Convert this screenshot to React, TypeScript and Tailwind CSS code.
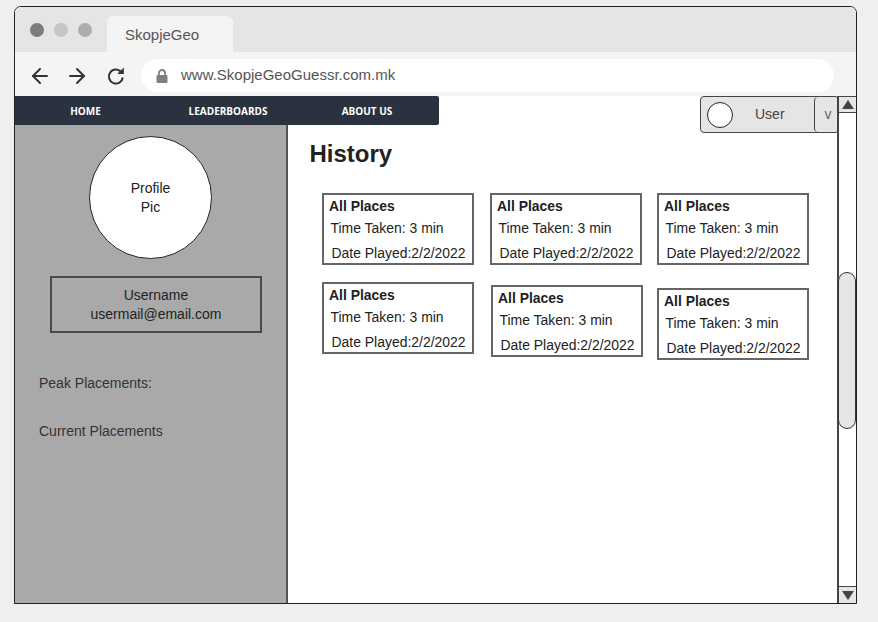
import { ArrowLeft, ArrowRight } from "lucide-react";

const sans = "font-['Liberation_Sans',Arial,sans-serif]";

function HistoryCard({ className = "" }: { className?: string }) {
  return (
    <div className={`w-[152px] h-[72px] shrink-0 border-2 border-[#666] bg-white text-[13.95px] leading-[16px] text-[#222] ${className}`}>
      <div className="pl-[5px] pt-[3px] font-bold">All Places</div>
      <div className="pl-[6.5px] pt-[6px]">Time Taken: 3 min</div>
      <div className="pl-[7.5px] pt-[9px] whitespace-nowrap">Date Played:2/2/2022</div>
    </div>
  );
}

export default function App() {
  return (
    <div className={`${sans} w-[878px] h-[622px] bg-[#efefef] pt-[6px] pl-[14px] overflow-hidden`}>
      <div className="relative w-[843px] h-[598px] flex flex-col border border-[#222] rounded-t-[7px] overflow-hidden bg-white">
        {/* ── Browser chrome ───────────────────────────────────────── */}
        <div className="h-[45px] shrink-0 bg-[#e5e5e5] flex items-end">
          <div className="flex items-center gap-[10px] pl-[15px] pb-[15px] w-[92px]">
            <span className="size-[14px] rounded-full bg-[#7c7c7c]" />
            <span className="size-[14px] rounded-full bg-[#c6c6c6]" />
            <span className="size-[14px] rounded-full bg-[#adadad]" />
          </div>
          <div className="w-[126px] h-[36px] bg-[#f4f4f4] rounded-t-[6px] flex items-center pl-[18px] pt-[2px] text-[15px] text-[#555]">
            SkopjeGeo
          </div>
        </div>
        <div className="h-[44px] shrink-0 bg-[#f4f4f4] flex items-center pl-[13px] pt-[3px]">
          <ArrowLeft size={24} strokeWidth={2} className="text-[#333]" />
          <ArrowRight size={24} strokeWidth={2} className="text-[#333] ml-[13px]" />
          <svg width="20" height="20" viewBox="0 0 20 20" className="ml-[17px] text-[#333]">
            <path d="M15 5.8A7 7 0 1 0 16.8 11.5" fill="none" stroke="currentColor" strokeWidth="2" />
            <path d="M11.2 8H17.8V1.6z" fill="currentColor" />
          </svg>
          <div className="ml-[15px] w-[693px] h-[33px] bg-white rounded-full flex items-center pl-[15px] text-[15px] text-[#555]">
            <svg width="12" height="14" viewBox="0 0 12 14" className="mr-[13px]">
              <path d="M3 6V4a3 3 0 0 1 6 0v2" fill="none" stroke="#808080" strokeWidth="1.8" />
              <rect x="0.5" y="6" width="11" height="8" rx="1" fill="#808080" />
            </svg>
            www.SkopjeGeoGuessr.com.mk
          </div>
        </div>

        {/* ── Nav ──────────────────────────────────────────────────── */}
        <nav className="h-[29px] w-[424px] shrink-0 bg-[#29323e] rounded-r-[2px] flex items-center pt-[1px] font-['Open_Sans',sans-serif] text-[10px] font-bold text-white uppercase">
          <span className="w-[141px] text-center">Home</span>
          <span className="w-[144px] text-center">Leaderboards</span>
          <span className="w-[134px] text-center">About Us</span>
        </nav>

        {/* ── Page ─────────────────────────────────────────────────── */}
        <div className="flex flex-1 min-h-0">
          <aside className="w-[273px] shrink-0 bg-[#a9a9a9] border-r-2 border-[#555] text-[14px] leading-[19px] text-[#222] flex flex-col">
            <div className="mt-[11px] ml-[74px] size-[123px] rounded-full bg-white border border-[#222] flex items-center justify-center text-center pt-[1px]">
              Profile<br />Pic
            </div>
            <div className="mt-[17px] ml-[35px] w-[212px] h-[57px] border-2 border-[#4a4a4a] text-center pt-[8px]">
              Username<br />usermail@email.com
            </div>
            <div className="mt-[41px] ml-[24px] text-[#333]">Peak Placements:</div>
            <div className="mt-[29px] ml-[24px] text-[#333]">Current Placements</div>
          </aside>

          <main className="flex-1 pl-[21.5px] pt-[14px]">
            <h1 className="text-[24px] leading-[30px] font-bold text-[#222]">History</h1>
            <div className="mt-[24px] ml-[12.5px] flex">
              <HistoryCard />
              <HistoryCard className="ml-[16px]" />
              <HistoryCard className="ml-[15px]" />
            </div>
            <div className="mt-[17px] ml-[12.5px] flex items-start">
              <HistoryCard />
              <HistoryCard className="ml-[17px] mt-[3px]" />
              <HistoryCard className="ml-[14px] mt-[6px]" />
            </div>
          </main>

          <div className="w-[18px] shrink-0" />
        </div>

        {/* ── User dropdown ────────────────────────────────────────── */}
        <div className="absolute left-[685px] top-[89px] w-[139px] h-[37px] flex bg-[#e5e5e5] border border-[#444] rounded-[4px] text-[14px] text-[#444]">
          <div className="flex-1 flex items-center pl-[6px]">
            <span className="size-[26px] rounded-full bg-white border border-[#222]" />
            <span className="ml-[22px]">User</span>
          </div>
          <div className="w-[24px] border-l border-[#444] rounded-l-[4px] flex items-center justify-center pl-[3px] text-[14px] text-[#666]">v</div>
        </div>

        {/* ── Scrollbar ────────────────────────────────────────────── */}
        <div className="absolute right-0 top-[89px] bottom-0 w-[19px] bg-white border-l-2 border-[#444] flex flex-col">
          <div className="h-[17px] shrink-0 bg-[#e5e5e5] border-t border-b border-[#444] flex items-center justify-center">
            <svg width="12" height="9" viewBox="0 0 12 9"><path d="M6 0l6 9H0z" fill="#444" /></svg>
          </div>
          <div className="flex-1 pt-[159px]">
            <div className="-ml-[1px] w-[18px] h-[157px] bg-[#e5e5e5] border border-[#333] rounded-[9px]" />
          </div>
          <div className="h-[17px] shrink-0 bg-[#e5e5e5] border-t border-[#444] flex items-center justify-center">
            <svg width="12" height="9" viewBox="0 0 12 9"><path d="M6 9L0 0h12z" fill="#444" /></svg>
          </div>
        </div>
      </div>
    </div>
  );
}
